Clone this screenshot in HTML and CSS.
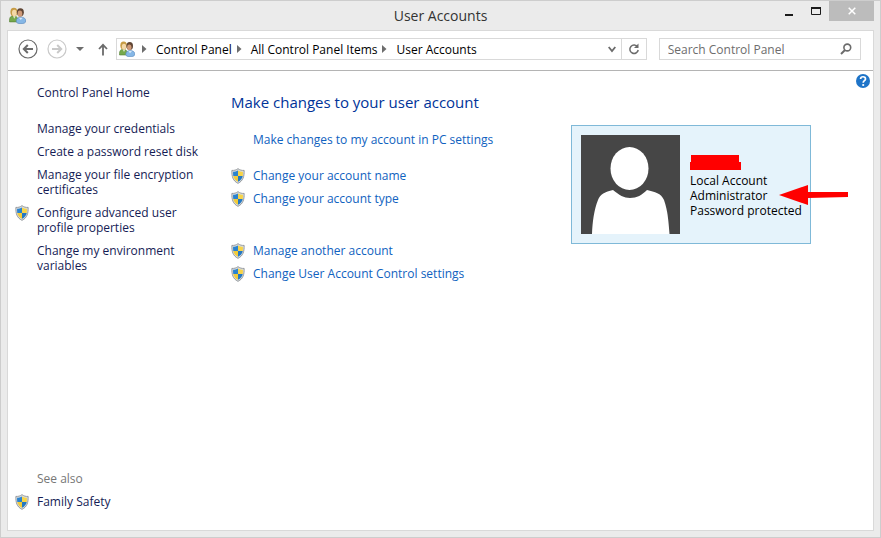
FILE: index.html
```html
<!DOCTYPE html>
<html lang="en">
<head>
    <meta charset="UTF-8">
    <meta name="viewport" content="width=device-width, initial-scale=1.0">
    <title>User Accounts</title>
    <link rel="stylesheet" href="styles.css">
</head>
<body>

<!-- Shared icons -->
<svg class="sprites" aria-hidden="true">
    <symbol id="shield" viewBox="0 0 16 18">
        <path d="M8 .6 C6 2.2 3.6 2.8 1 2.6 C.7 9.5 2.2 14.6 8 17.4 C13.8 14.6 15.3 9.5 15 2.6 C12.4 2.8 10 2.2 8 .6Z" fill="#d9dde0" stroke="#8b9093" stroke-width="1"/>
        <path d="M8 2.6 V9 H2.6 C2.3 7.4 2.3 6 2.4 4.2 C4.5 4.2 6.3 3.7 8 2.6Z" fill="#2b83cf"/>
        <path d="M8 2.6 C9.7 3.7 11.5 4.2 13.6 4.2 C13.7 6 13.7 7.4 13.4 9 H8Z" fill="#f7d448"/>
        <path d="M2.6 9 H8 V15.7 C4.8 14 3.2 12 2.6 9Z" fill="#f2cb3a"/>
        <path d="M8 9 H13.4 C12.8 12 11.2 14 8 15.7Z" fill="#2478c2"/>
    </symbol>
    <symbol id="users" viewBox="0 0 16 16">
        <path d="M.5 14 C.2 9.5 1.8 8.2 4.5 8.2 C7 8.2 8.4 9.8 8.2 14Z" fill="#76a94c" stroke="#557f35" stroke-width=".6"/>
        <path d="M3.5 8 L5 11 L6.5 8Z" fill="#dfe9d0"/>
        <ellipse cx="4.6" cy="4.6" rx="3.3" ry="4" fill="#c79c45"/>
        <ellipse cx="5" cy="5.6" rx="2.2" ry="2.9" fill="#f3d8a8"/>
        <ellipse cx="10.7" cy="5" rx="3.3" ry="3.9" fill="#5f4534"/>
        <ellipse cx="10.3" cy="6.3" rx="2.2" ry="2.9" fill="#cf9a78"/>
        <path d="M6.8 13.4 C6.8 10.7 8.7 9.6 11.2 9.6 C14.2 9.6 15.8 11 15.8 13.2 C15.8 15 13.8 15.7 11.2 15.7 C8.6 15.7 6.8 15 6.8 13.4Z" fill="#86b7e6" stroke="#5586bb" stroke-width=".6"/>
        <path d="M9.3 10 L11 12.3 L13 10Z" fill="#d6e8f8"/>
    </symbol>
    <symbol id="crumb-arrow" viewBox="0 0 5 8">
        <path d="M0 0 L4.5 4 L0 8Z" fill="#6d6d6d"/>
    </symbol>
</svg>

<div class="window">
    <header class="titlebar">
        <svg class="app-icon"><use href="#users"/></svg>
        <h1 class="window-title">User Accounts</h1>
        <div class="window-buttons">
            <button class="window-button" aria-label="Minimize">
                <svg width="8" height="12"><path d="M0 10 H8" stroke="#1b1b1b" stroke-width="2"/></svg>
            </button>
            <button class="window-button" aria-label="Maximize">
                <svg width="10" height="8"><path d="M0 1 H10" stroke="#1b1b1b" stroke-width="2"/><path d="M.5 1 V7.5 H9.5 V1" fill="none" stroke="#1b1b1b"/></svg>
            </button>
            <button class="window-button close" aria-label="Close">
                <svg width="8" height="8"><path d="M.7 .7 L7.3 7.3 M7.3 .7 L.7 7.3" stroke="#fff" stroke-width="1.5"/></svg>
            </button>
        </div>
    </header>

    <div class="client">
        <nav class="toolbar" aria-label="Navigation">
            <button class="tool back" aria-label="Back">
                <svg width="20" height="20" viewBox="0 0 20 20" fill="none" stroke="#6b6b6b"><circle cx="10" cy="10" r="9" stroke-width="1.2"/><path d="M15 10 H6 M9.8 6 L5.8 10 L9.8 14" stroke-width="2"/></svg>
            </button>
            <button class="tool forward" aria-label="Forward">
                <svg width="20" height="20" viewBox="0 0 20 20" fill="none" stroke="#c9c9c9"><circle cx="10" cy="10" r="9" stroke-width="1.2"/><path d="M5 10 H14 M10.2 6 L14.2 10 L10.2 14" stroke-width="2"/></svg>
            </button>
            <button class="tool recent" aria-label="Recent locations">
                <svg width="8" height="4"><path d="M0 0 H8 L4 4Z" fill="#6d6d6d"/></svg>
            </button>
            <button class="tool up" aria-label="Up">
                <svg width="10" height="13" viewBox="0 0 10 13" fill="none" stroke="#6b6b6b"><path d="M5 12.5 V2 M1 6 L5 1.8 L9 6" stroke-width="1.8"/></svg>
            </button>
            <div class="address">
                <svg class="address-icon"><use href="#users"/></svg>
                <svg class="crumb-arrow"><use href="#crumb-arrow"/></svg>
                <a class="crumb" href="#">Control Panel</a>
                <svg class="crumb-arrow"><use href="#crumb-arrow"/></svg>
                <a class="crumb" href="#">All Control Panel Items</a>
                <svg class="crumb-arrow"><use href="#crumb-arrow"/></svg>
                <a class="crumb" href="#">User Accounts</a>
                <button class="tool history" aria-label="Previous locations">
                    <svg width="8" height="7"><path d="M.7 1 L4 5 L7.3 1" fill="none" stroke="#6b6b6b" stroke-width="1.8"/></svg>
                </button>
                <button class="tool refresh" aria-label="Refresh">
                    <svg width="12" height="12" viewBox="0 0 12 12"><path d="M9.6 4 A4.2 4.2 0 1 0 10.2 7" fill="none" stroke="#6b6b6b" stroke-width="1.5"/><path d="M10.5 .5 V5 H6Z" fill="#6b6b6b"/></svg>
                </button>
            </div>
            <div class="search">
                <input class="search-input" type="text" placeholder="Search Control Panel" aria-label="Search Control Panel">
                <svg width="12" height="12" viewBox="0 0 12 12" fill="none" stroke="#6b6b6b"><circle cx="7.3" cy="4.5" r="3.4" stroke-width="1.6"/><path d="M5 7 L1 11" stroke-width="2"/></svg>
            </div>
        </nav>

        <div class="content">
            <aside class="sidebar">
                <a class="side-link home" href="#">Control Panel Home</a>
                <a class="side-link" href="#">Manage your credentials</a>
                <a class="side-link" href="#">Create a password reset disk</a>
                <a class="side-link" href="#">Manage your file encryption certificates</a>
                <a class="side-link with-shield" href="#"><svg class="shield"><use href="#shield"/></svg>Configure advanced user profile properties</a>
                <a class="side-link" href="#">Change my environment variables</a>
                <p class="see-also">See also</p>
                <a class="side-link with-shield" href="#"><svg class="shield"><use href="#shield"/></svg>Family Safety</a>
            </aside>

            <main class="main">
                <section class="tasks">
                    <h2 class="heading">Make changes to your user account</h2>
                    <ul class="task-group">
                        <li><a class="task" href="#">Make changes to my account in PC settings</a></li>
                    </ul>
                    <ul class="task-group">
                        <li><a class="task with-shield" href="#"><svg class="shield"><use href="#shield"/></svg>Change your account name</a></li>
                        <li><a class="task with-shield" href="#"><svg class="shield"><use href="#shield"/></svg>Change your account type</a></li>
                    </ul>
                    <ul class="task-group other">
                        <li><a class="task with-shield" href="#"><svg class="shield"><use href="#shield"/></svg>Manage another account</a></li>
                        <li><a class="task with-shield" href="#"><svg class="shield"><use href="#shield"/></svg>Change User Account Control settings</a></li>
                    </ul>
                </section>

                <section class="account-card">
                    <svg class="avatar" viewBox="0 0 99 99" role="img" aria-label="Account picture">
                        <rect width="99" height="99" fill="#464646"/>
                        <ellipse cx="48.5" cy="33.5" rx="19" ry="21.5" fill="#fff"/>
                        <path d="M11 99 C11.5 87 13 75 17 65 C19 59 24 57 32 55 C38 60 43 63 49 63 C56 63 61 60 66 55 C74 57 80 58 83 65 C87 76 87.5 88 88.5 99Z" fill="#fff"/>
                    </svg>
                    <div class="account-info">
                        <svg class="redacted" width="52" height="15"><path d="M1 0 H49 V7 H51 V15 H0 V7 H1Z" fill="#f00"/></svg>
                        <p>Local Account<br>Administrator<br>Password protected</p>
                    </div>
                    <svg class="pointer" width="70" height="20"><path d="M0 10 L29 0 V7 L69 7 V12 L29 13 V20Z" fill="#f00"/></svg>
                </section>
            </main>

            <button class="tool help" aria-label="Help">
                <svg width="14" height="14" viewBox="0 0 14 14"><circle cx="7" cy="7" r="7" fill="#1e74c8"/><path d="M4.6 5 C4.6 2 9.5 2 9.5 4.9 C9.5 6.7 7.2 6.6 7.2 8.8" fill="none" stroke="#fff" stroke-width="1.7"/><circle cx="7.2" cy="11" r="1.1" fill="#fff"/></svg>
            </button>
        </div>
    </div>
</div>

</body>
</html>
```
FILE: styles.css
```css
* {
    box-sizing: border-box;
}

body {
    margin: 0;
    font-family: "Open Sans", "Noto Sans", sans-serif;
    font-size: 12px;
    line-height: 15px;
    color: #000;
}

h1, h2, p, ul {
    margin: 0;
    padding: 0;
    font-weight: normal;
}

ul {
    list-style: none;
}

a {
    text-decoration: none;
}

a:hover {
    text-decoration: underline;
}

svg {
    display: block;
    flex: none;
}

button {
    padding: 0;
    border: 0;
    background: none;
    font: inherit;
}

.sprites {
    position: absolute;
    width: 0;
    height: 0;
}

.window {
    display: flex;
    flex-direction: column;
    min-height: 100vh;
    padding: 0 6px 6px;
    border: 1px solid #cdcdcd;
    background-color: #ebebeb;
}

/* Title bar */
.titlebar {
    display: grid;
    grid-template-columns: 1fr auto 1fr;
    height: 29px;
}

.app-icon {
    width: 17px;
    height: 17px;
    margin: 6px 0 0 2px;
}

.window-title {
    font-size: 14px;
    line-height: 29px;
    color: #333;
}

.window-buttons {
    display: flex;
    justify-content: flex-end;
}

.window-button {
    display: flex;
    align-items: center;
    justify-content: center;
    width: 27px;
    height: 20px;
}

.close {
    width: 45px;
    background-color: #bcbcbc;
}

/* Client area */
.client {
    display: flex;
    flex-direction: column;
    flex: 1;
    border: 1px solid #d9d9d9;
    background-color: #fff;
}

.toolbar {
    display: flex;
    align-items: center;
    height: 40px;
    padding: 0 12px 3px 10px;
    border-bottom: 1px solid #b4b4b4;
}

.tool {
    display: flex;
    align-items: center;
    justify-content: center;
}

.forward {
    margin-left: 9px;
}

.recent {
    margin-left: 9px;
}

.up {
    margin: 0 8px 0 14px;
}

.address {
    display: flex;
    align-items: center;
    flex: 1;
    height: 22px;
    border: 1px solid #d9d9d9;
}

.address-icon {
    width: 16px;
    height: 16px;
    margin: 0 7px 0 2px;
}

.crumb-arrow {
    width: 5px;
    height: 8px;
}

.crumb {
    margin: 0 5px 0 9px;
    color: #000;
}

.history {
    width: 18px;
    height: 20px;
    margin-left: auto;
}

.refresh {
    width: 25px;
    height: 20px;
    border-left: 1px solid #d9d9d9;
}

.search {
    display: flex;
    align-items: center;
    width: 24%;
    height: 22px;
    margin-left: 12px;
    padding: 0 8px;
    border: 1px solid #d9d9d9;
}

.search-input {
    flex: 1;
    min-width: 0;
    padding: 0;
    border: 0;
    outline: 0;
    background: none;
    font: inherit;
}

.search-input::placeholder {
    color: #6d6d6d;
    opacity: 1;
}

.content {
    display: flex;
    align-items: stretch;
    flex: 1;
}

/* Left links */
.sidebar {
    display: flex;
    flex-direction: column;
    gap: 8px;
    width: 193px;
    padding: 14px 0 21px 29px;
}

.side-link {
    color: #151c55;
}

.home {
    margin-bottom: 13px;
}

.see-also {
    margin-top: auto;
    color: #777;
}

.with-shield {
    position: relative;
}

.shield {
    position: absolute;
    top: 0;
    left: -22px;
    width: 14px;
    height: 16px;
}

/* Account tasks */
.main {
    display: flex;
    align-items: flex-start;
    flex: 1;
    padding-left: 30px;
}

.tasks {
    width: 340px;
    padding-top: 21px;
}

.heading {
    margin-bottom: 20px;
    font-size: 15px;
    line-height: 20px;
    color: #003399;
}

.task-group {
    display: flex;
    flex-direction: column;
    gap: 8px;
    margin-bottom: 21px;
    padding-left: 22px;
}

.other {
    margin-top: 37px;
}

.task {
    display: block;
    color: #0f62c0;
}

.account-card {
    position: relative;
    display: flex;
    align-items: center;
    gap: 10px;
    width: 240px;
    margin-top: 54px;
    padding: 9px;
    border: 1px solid #7fb9d8;
    background-color: #e5f3fb;
}

.avatar {
    width: 99px;
    height: 99px;
}

.account-info {
    padding-top: 3px;
    white-space: nowrap;
}

.redacted {
    margin-bottom: 3px;
}

.pointer {
    position: absolute;
    top: 59px;
    left: 207px;
}

.help {
    align-self: flex-start;
    margin: 3px 3px 0 0;
}
```
